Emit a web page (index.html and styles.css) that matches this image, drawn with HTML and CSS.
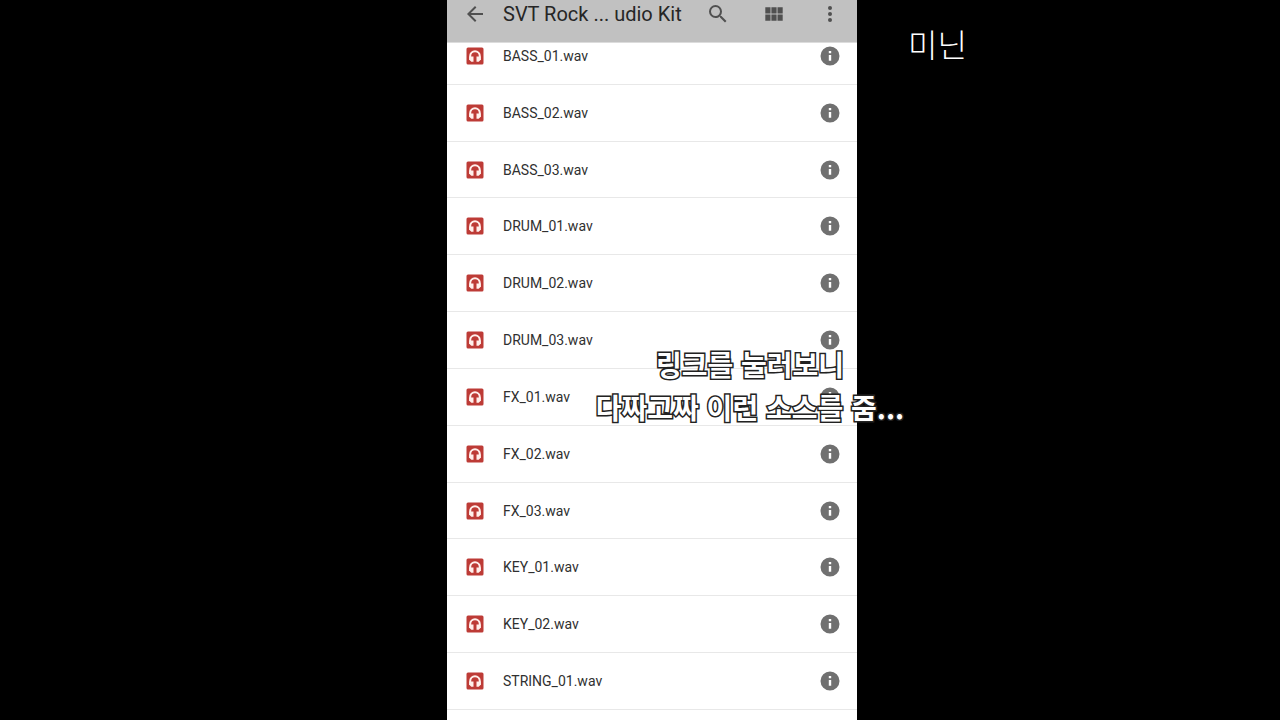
FILE: index.html
```
<!DOCTYPE html>
<html lang="ko">
<head>
    <meta charset="UTF-8">
    <title>SVT Rock Studio Kit</title>
    <link rel="stylesheet" href="styles.css">
</head>
<body>
    <svg class="defs" width="0" height="0" aria-hidden="true">
        <symbol id="audio" viewBox="0 0 18 18">
            <rect width="17" height="17" x="0.5" y="0.5" rx="1.5" fill="#bd3b36"/>
            <path d="M4.200 13V9a4.800 4.800 0 0 1 9.600 0v4" fill="none" stroke="#fff0ec" stroke-width="2"/>
            <path d="M3.300 9.500h4.200v5.200H5.300l-2-2zM10.500 9.500h4.200v3.200l-2 2h-2.200z" fill="#fff0ec"/>
        </symbol>
        <symbol id="info" viewBox="0 0 20 20">
            <path d="M10 .5a9.500 9.500 0 1 0 0 19 9.500 9.500 0 0 0 0-19zm1.200 14.300H8.800V9.100h2.400zm0-7.600H8.800V5h2.400z" fill="#707070"/>
        </symbol>
    </svg>

    <div class="stage">
        <main class="phone">
            <header class="toolbar">
                <button class="icon-btn" aria-label="Back">
                    <svg width="24" height="24" viewBox="0 0 24 24"><path d="M20 11H7.830l5.590-5.590L12 4l-8 8 8 8 1.410-1.410L7.830 13H20z"/></svg>
                </button>
                <h1 class="title">SVT Rock ... udio Kit</h1>
                <div class="actions">
                    <button class="icon-btn" aria-label="Search">
                        <svg width="24" height="24" viewBox="0 0 24 24"><path d="M15.500 14h-.79l-.28-.27A6.471 6.471 0 0 0 16 9.500 6.500 6.500 0 1 0 9.500 16c1.610 0 3.090-.59 4.230-1.570l.27.28v.79l5 4.990L20.490 19zm-6 0C7.010 14 5 11.990 5 9.500S7.010 5 9.500 5 14 7.010 14 9.500 11.990 14 9.500 14z"/></svg>
                    </button>
                    <button class="icon-btn" aria-label="Grid view">
                        <svg width="24" height="24" viewBox="0 0 24 24"><path d="M3.300 5.300h5.200v6.200H3.300zM9.400 5.300h5.200v6.200H9.400zM15.500 5.300h5.200v6.200h-5.200zM3.300 12.500h5.200v6.200H3.300zM9.400 12.500h5.200v6.200H9.400zM15.500 12.500h5.200v6.200h-5.200z"/></svg>
                    </button>
                    <button class="icon-btn" aria-label="More options">
                        <svg width="24" height="24" viewBox="0 0 24 24"><circle cx="12" cy="6" r="2"/><circle cx="12" cy="12" r="2"/><circle cx="12" cy="18" r="2"/></svg>
                    </button>
                </div>
            </header>

            <ul class="files" id="files"></ul>
        </main>
        <p class="name">미닌</p>
        <p class="caption">링크를 눌러보니<br>다짜고짜 이런 소스를 줌...</p>
    </div>

    <script>
        const files = ['BASS_01', 'BASS_02', 'BASS_03', 'DRUM_01', 'DRUM_02', 'DRUM_03',
            'FX_01', 'FX_02', 'FX_03', 'KEY_01', 'KEY_02', 'STRING_01'];

        document.getElementById('files').innerHTML = files.map(file => `
            <li class="file">
                <svg width="18" height="18" aria-hidden="true"><use href="#audio"/></svg>
                <span class="file-name">${file}.wav</span>
                <button class="icon-btn" aria-label="Details of ${file}.wav">
                    <svg width="20" height="20"><use href="#info"/></svg>
                </button>
            </li>`).join('');
    </script>
</body>
</html>
```
FILE: styles.css
```
* {
    box-sizing: border-box;
}
body {
    margin: 0;
    background-color: #000;
    font-family: Roboto, "Noto Sans CJK KR", sans-serif;
}
.defs {
    display: block;
}
.stage {
    position: relative;
    display: grid;
    grid-template-columns: 447fr 410fr 423fr;
    height: 100vh;
    overflow: hidden;
}
.phone {
    grid-column: 2;
    display: flex;
    flex-direction: column;
    min-height: 0;
    background-color: #fff;
}
.toolbar {
    z-index: 1;
    display: flex;
    align-items: center;
    height: 43px;
    padding: 0 15px 14px 16px;
    background-color: #c1c1c1;
    border-bottom: 1px solid #dcdcdc;
}
.icon-btn {
    display: flex;
    align-items: center;
    justify-content: center;
    width: 24px;
    height: 24px;
    padding: 0;
    border: none;
    background: none;
    cursor: pointer;
}
.toolbar svg {
    fill: #505050;
}
.title {
    flex: 1;
    margin: 0 0 0 16px;
    font-size: 20px;
    font-weight: 400;
    line-height: 24px;
    color: #262626;
    white-space: nowrap;
}
.actions {
    display: flex;
    gap: 32px;
}

/* the list is scrolled, its first row starts under the toolbar */
.files {
    flex: 1;
    display: flex;
    flex-direction: column;
    margin: -15px 0 0;
    padding: 0 0 10px;
    list-style: none;
}
.file {
    flex: 1;
    display: flex;
    align-items: center;
    padding: 0 15px 0 19px;
    border-bottom: 1px solid #e8e8e8;
}
.file-name {
    flex: 1;
    margin-left: 19px;
    font-size: 14px;
    line-height: 20px;
    color: #303030;
}

/* text laid over the video */
.name {
    position: absolute;
    top: 19px;
    left: 908px;
    margin: 0;
    font-family: "Noto Sans CJK KR", sans-serif;
    font-size: 32px;
    font-weight: 300;
    line-height: 48px;
    color: #fff;
}
.caption {
    position: absolute;
    top: 343px;
    left: 750px;
    transform: translateX(-50%);
    margin: 0;
    font-family: "Noto Sans CJK KR", sans-serif;
    font-size: 28px;
    font-weight: 700;
    line-height: 43px;
    text-align: center;
    white-space: nowrap;
    color: #fff;
    -webkit-text-stroke: 3px #222;
    paint-order: stroke fill;
}
```
